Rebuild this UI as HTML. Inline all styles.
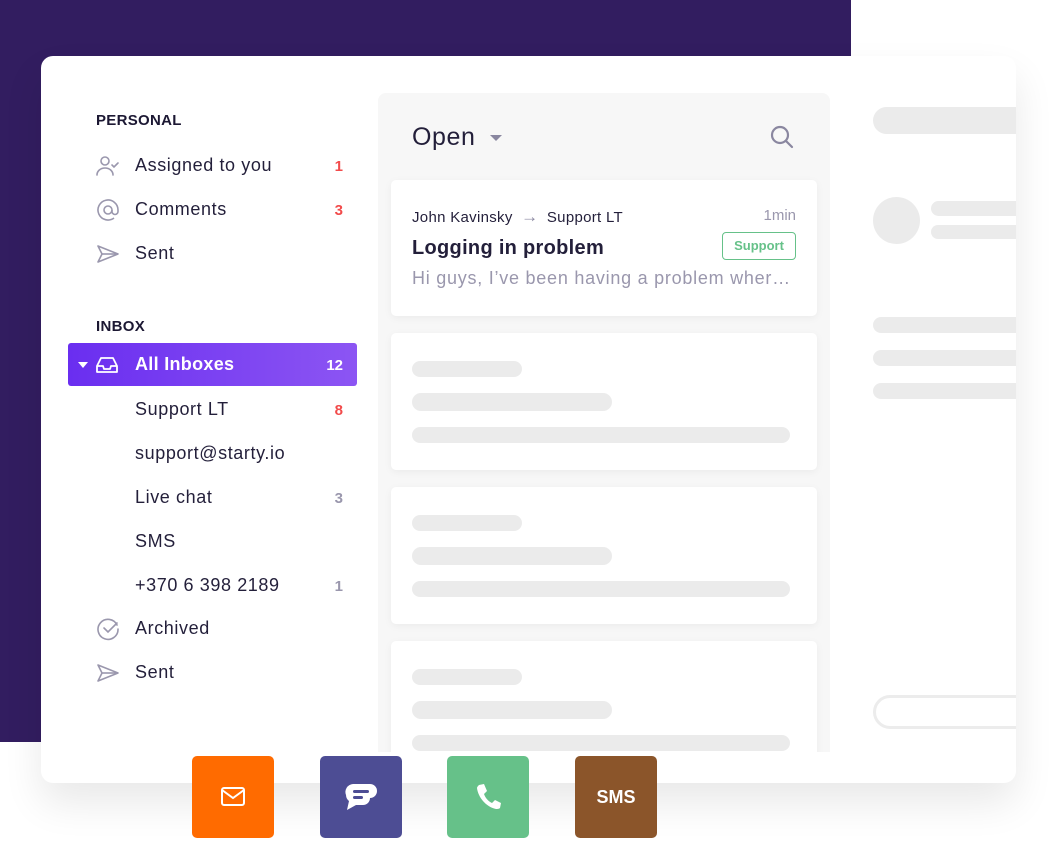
<!DOCTYPE html>
<html><head><meta charset="utf-8"><style>
*{margin:0;padding:0;box-sizing:border-box}
body{width:1056px;height:848px;background:#fff;position:relative;overflow:hidden;font-family:"Liberation Sans",sans-serif;color:#231f3a}
.abs{position:absolute}
.bg{left:0;top:0;width:851px;height:742px;background:#321d60;border-bottom-right-radius:3px}
.card{left:41px;top:56px;width:975px;height:727px;background:#fff;border-radius:12px;box-shadow:0 20px 40px rgba(0,0,0,.09);overflow:hidden}
.h{font-size:15px;font-weight:bold;letter-spacing:.3px;color:#1c1833}
.it{font-size:18px;color:#231f3a;letter-spacing:.6px}
.cnt{font-size:15px;font-weight:bold;width:20px;text-align:right}
.red{color:#f24b4b}.gr{color:#9a97ad}
.ic{left:55px}
.mid{left:337px;top:37px;width:452px;height:659px;background:#f7f7f7;border-radius:8px 8px 0 0;overflow:hidden}
.msg{left:13px;width:426px;background:#fff;border-radius:5px;box-shadow:0 2px 8px rgba(0,0,0,.05)}
.bar{background:#ebebeb;border-radius:9px;position:absolute}
.btn{top:756px;width:82px;height:82px;border-radius:5px;display:flex;align-items:center;justify-content:center}
</style></head><body>
<div class="abs bg"></div>
<div class="abs card">
  <div class="abs h" style="left:55px;top:56px">PERSONAL</div>
  <svg class="abs ic" style="top:98px" width="24" height="24" viewBox="0 0 24 24" fill="none" stroke="#9a97ad" stroke-width="1.6" stroke-linecap="round"><circle cx="9" cy="7" r="4"/><path d="M1 21c0-4 3.5-7 8-7s8 3 8 7"/><path d="M16 11l2 2 4-4"/></svg>
  <div class="abs it" style="left:94px;top:99px">Assigned to you</div>
  <div class="abs cnt red" style="left:282px;top:102px">1</div>
  <svg class="abs ic" style="top:142px" width="24" height="24" viewBox="0 0 24 24" fill="none" stroke="#9a97ad" stroke-width="1.6"><circle cx="12" cy="12" r="4"/><path d="M16 12v1.5a3 3 0 0 0 6 0V12a10 10 0 1 0-4 8"/></svg>
  <div class="abs it" style="left:94px;top:143px">Comments</div>
  <div class="abs cnt red" style="left:282px;top:146px">3</div>
  <svg class="abs ic" style="top:186px" width="24" height="24" viewBox="0 0 24 24" fill="none" stroke="#9a97ad" stroke-width="1.6" stroke-linejoin="round"><path d="M2 4l20 8-20 8 4-8z"/><path d="M6 12h16"/></svg>
  <div class="abs it" style="left:94px;top:187px">Sent</div>

  <div class="abs h" style="left:55px;top:262px">INBOX</div>
  <div class="abs" style="left:27px;top:287px;width:289px;height:43px;border-radius:3px;background:linear-gradient(90deg,#6a2ef0,#8c55f3)"></div>
  <div class="abs" style="left:37px;top:306px;width:0;height:0;border-left:5px solid transparent;border-right:5px solid transparent;border-top:6px solid #fff"></div>
  <svg class="abs" style="left:55px;top:299px" width="22" height="20" viewBox="0 0 22 20" fill="none" stroke="#fff" stroke-width="1.8" stroke-linejoin="round"><path d="M5 3h12l4 8v6H1v-6z"/><path d="M1 11h6l1 3h6l1-3h6"/></svg>
  <div class="abs it" style="left:94px;top:298px;color:#fff;font-weight:bold;letter-spacing:.3px">All Inboxes</div>
  <div class="abs cnt" style="left:272px;top:301px;width:30px;color:#fff">12</div>

  <div class="abs it" style="left:94px;top:343px">Support LT</div>
  <div class="abs cnt red" style="left:282px;top:346px">8</div>
  <div class="abs it" style="left:94px;top:387px">support@starty.io</div>
  <div class="abs it" style="left:94px;top:431px">Live chat</div>
  <div class="abs cnt gr" style="left:282px;top:434px">3</div>
  <div class="abs it" style="left:94px;top:475px">SMS</div>
  <div class="abs it" style="left:94px;top:519px">+370 6 398 2189</div>
  <div class="abs cnt gr" style="left:282px;top:522px">1</div>
  <svg class="abs ic" style="top:561px" width="24" height="24" viewBox="0 0 24 24" fill="none" stroke="#9a97ad" stroke-width="1.6" stroke-linecap="round"><path d="M21 8a10 10 0 1 0 1 4"/><path d="M8 11l4 4 9-9"/></svg>
  <div class="abs it" style="left:94px;top:562px">Archived</div>
  <svg class="abs ic" style="top:605px" width="24" height="24" viewBox="0 0 24 24" fill="none" stroke="#9a97ad" stroke-width="1.6" stroke-linejoin="round"><path d="M2 4l20 8-20 8 4-8z"/><path d="M6 12h16"/></svg>
  <div class="abs it" style="left:94px;top:606px">Sent</div>

  <div class="abs mid">
    <div class="abs" style="left:34px;top:30px;font-size:25px;color:#231f3a;letter-spacing:.6px">Open</div>
    <div class="abs" style="left:112px;top:42px;border-left:6px solid transparent;border-right:6px solid transparent;border-top:6px solid #8a87a0"></div>
    <svg class="abs" style="left:391px;top:31px" width="26" height="26" viewBox="0 0 26 26" fill="none" stroke="#8a87a0" stroke-width="2.2" stroke-linecap="round"><circle cx="11" cy="11" r="8"/><path d="M17 17l6 6"/></svg>
    <div class="abs msg" style="top:87px;height:136px">
      <div class="abs" style="left:21px;top:27px;font-size:15px;color:#231f3a;letter-spacing:.3px">John Kavinsky <span style="color:#8a87a0;margin:0 4px;font-size:17px">→</span> Support LT</div>
      <div class="abs" style="right:21px;top:27px;font-size:15px;color:#9a97ad">1min</div>
      <div class="abs" style="left:21px;top:57px;font-size:20px;font-weight:bold;color:#231f3a;letter-spacing:.3px">Logging in problem</div>
      <div class="abs" style="right:21px;top:52px;width:74px;height:28px;border:1.5px solid #66c189;border-radius:4px;color:#66c189;font-size:13px;font-weight:bold;text-align:center;line-height:25px">Support</div>
      <div class="abs" style="left:21px;top:88px;font-size:18px;color:#9a97ad;white-space:nowrap;letter-spacing:.75px">Hi guys, I’ve been having a problem wher…</div>
    </div>
    <div class="abs msg" style="top:240px;height:137px"><div class="bar" style="left:21px;top:28px;width:110px;height:16px"></div><div class="bar" style="left:21px;top:60px;width:200px;height:18px"></div><div class="bar" style="left:21px;top:94px;width:378px;height:16px"></div></div>
    <div class="abs msg" style="top:394px;height:137px"><div class="bar" style="left:21px;top:28px;width:110px;height:16px"></div><div class="bar" style="left:21px;top:60px;width:200px;height:18px"></div><div class="bar" style="left:21px;top:94px;width:378px;height:16px"></div></div>
    <div class="abs msg" style="top:548px;height:160px"><div class="bar" style="left:21px;top:28px;width:110px;height:16px"></div><div class="bar" style="left:21px;top:60px;width:200px;height:18px"></div><div class="bar" style="left:21px;top:94px;width:378px;height:16px"></div></div>
  </div>

  <div class="bar" style="left:832px;top:51px;width:200px;height:27px;border-radius:14px"></div>
  <div class="abs" style="left:832px;top:141px;width:47px;height:47px;border-radius:50%;background:#ebebeb"></div>
  <div class="bar" style="left:890px;top:145px;width:120px;height:15px"></div>
  <div class="bar" style="left:890px;top:169px;width:120px;height:14px"></div>
  <div class="bar" style="left:832px;top:261px;width:200px;height:16px"></div>
  <div class="bar" style="left:832px;top:294px;width:200px;height:16px"></div>
  <div class="bar" style="left:832px;top:327px;width:200px;height:16px"></div>
  <div class="abs" style="left:832px;top:639px;width:200px;height:34px;border:3px solid #ececec;border-radius:17px"></div>
</div>

<div class="abs btn" style="left:192px;background:#ff6b00"><svg width="26" height="22" viewBox="0 0 26 22" fill="none" stroke="#fff" stroke-width="2"><rect x="2" y="2" width="22" height="17" rx="2"/><path d="M2 4l11 8 11-8"/></svg></div>
<div class="abs btn" style="left:320px;background:#4d4d94"><svg width="34" height="30" viewBox="0 0 34 30"><path d="M9 2h17a7 7 0 0 1 0 14v0a7 7 0 0 1-7 7H12l-9 5 2-9a8 8 0 0 1-3-6a8 8 0 0 1 7-11z" fill="#fff"/><rect x="9" y="8" width="16" height="3" rx="1.5" fill="#4d4d94"/><rect x="9" y="14" width="10" height="3" rx="1.5" fill="#4d4d94"/></svg></div>
<div class="abs btn" style="left:447px;background:#66c189"><svg width="26" height="28" viewBox="0 0 26 28"><path d="M4 2l5-1 3 7-3 3c1.5 4 4 7 8 9l3-3 6 3-1 5c-1 1-3 1-4 1C11 24 3 14 2 5c0-1 1-2 2-3z" fill="#fff"/></svg></div>
<div class="abs btn" style="left:575px;background:#8b552a;color:#fff;font-size:18px;font-weight:bold">SMS</div>
</body></html>
